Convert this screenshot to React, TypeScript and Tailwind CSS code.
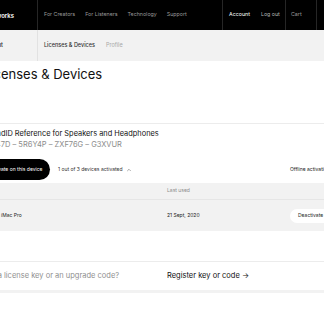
import { ChevronUp } from "lucide-react"

export default function App() {
  const nav = ["For Creators", "For Listeners", "Technology", "Support"]

  return (
    <div className="w-[324px] h-[324px] overflow-hidden bg-white font-['Inter','Liberation_Sans',sans-serif]">
      <div className="ml-[-17px] w-[400px]">
        {/* Top bar */}
        <header className="h-[30px] bg-black flex text-[5.3px] whitespace-nowrap">
          <div className="w-[55px] border-r border-[#262626] flex items-center justify-end pr-[23px]">
            <span className="text-white font-semibold text-[6px]">Sonarworks</span>
          </div>
          <nav className="w-[185px] border-r border-[#262626] flex items-center gap-[10px] pl-[6px] text-[#9a9a9a]">
            {nav.map((item) => (
              <span key={item}>{item}</span>
            ))}
          </nav>
          <div className="w-[63px] border-r border-[#262626] flex items-center gap-[11px] pl-[6px]">
            <span className="text-white">Account</span>
            <span className="text-[#b5b5b5]">Log out</span>
          </div>
          <div className="w-[31px] border-r border-[#262626] flex items-center pl-[5px] text-[#9a9a9a]">
            Cart
          </div>
        </header>

        {/* Sub navigation */}
        <div className="h-[31px] bg-[#f2f2f2] flex text-[5.5px] whitespace-nowrap">
          <div className="w-[55px] border-r border-[#e2e2e2] flex items-center justify-end pr-[34px]">
            <span className="text-[#222] font-medium">Account</span>
          </div>
          <div className="flex items-center gap-[11px] pl-[6px]">
            <span className="text-[#333] font-medium">Licenses &amp; Devices</span>
            <span className="text-[#a8a8a8]">Profile</span>
          </div>
        </div>

        {/* Title */}
        <div className="h-[62px] pt-[5px]">
          <h1 className="text-[13px] leading-[16px] text-[#111] whitespace-nowrap">Licenses &amp; Devices</h1>
        </div>

        {/* License card */}
        <section className="border-t border-[#ececec] whitespace-nowrap">
          <div className="pt-[5px] pb-[3px]">
            <div className="text-[7.4px] leading-[10px] text-[#111]">SoundID Reference for Speakers and Headphones</div>
            <div className="mt-[1px] text-[7.5px] leading-[10px] text-[#8c8c8c]">QW47D – 5R6Y4P – ZXF76G – G3XVUR</div>
            <div className="mt-[9px] flex items-center h-[21px] text-[5px]">
              <button className="h-[21px] w-[67px] rounded-full bg-black text-white flex items-center pl-[6px]">
                Activate on this device
              </button>
              <span className="ml-[8px] w-[232px] flex items-center gap-[3px] text-[#333]">
                1 out of 3 devices activated
                <ChevronUp size={6} strokeWidth={2} className="text-[#555]" />
              </span>
              <span className="text-[#222]">Offline activation</span>
            </div>
          </div>

          {/* Devices table */}
          <div className="bg-[#f2f2f2] text-[5px]">
            <div className="h-[17px] flex items-center border-b border-[#e6e6e6]">
              <span className="w-[184px]"></span>
              <span className="text-[#8c8c8c]">Last used</span>
            </div>
            <div className="h-[31px] flex items-center">
              <span className="w-[184px] pl-[18px] text-[#222]">iMac Pro</span>
              <span className="w-[123px] text-[#222]">21 Sept, 2020</span>
              <button className="h-[14px] w-[60px] rounded-full bg-white text-[#222] flex items-center pl-[8px]">
                Deactivate
              </button>
            </div>
          </div>
        </section>

        {/* Register key */}
        <div className="h-[30px]"></div>
        <div className="border-t border-[#ececec] h-[29px] flex items-center text-[7.5px] whitespace-nowrap">
          <span className="w-[184px] text-[#8f8f8f]">Got a license key or an upgrade code?</span>
          <span className="text-[#111]">Register key or code →</span>
        </div>
        <div className="h-[3px] bg-[#f2f2f2]"></div>
      </div>
    </div>
  )
}
